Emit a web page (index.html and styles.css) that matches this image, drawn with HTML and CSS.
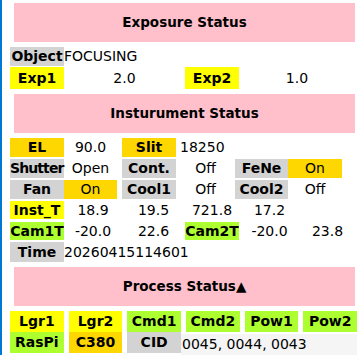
FILE: index.html
```html
<!DOCTYPE html>
<html lang="en">
<head>
<meta charset="UTF-8">
<meta name="viewport" content="width=device-width, initial-scale=1.0">
<title>Status Monitor</title>
<link rel="stylesheet" href="styles.css">
</head>
<body>
<div id="panel">
    <div class="title first">Exposure Status</div>
    <div class="row obj">
        <span class="label gray">Object</span><span class="val left">FOCUSING</span>
    </div>
    <div class="row exp">
        <span class="label yellow">Exp1</span><span class="val">2.0</span>
        <span class="label yellow">Exp2</span><span class="val">1.0</span>
    </div>

    <div class="title">Insturument Status</div>
    <div class="row inst">
        <span class="label gold">EL</span><span class="val">90.0</span>
        <span class="label gold">Slit</span><span class="val left">18250</span>
        <span></span><span></span>
    </div>
    <div class="row inst">
        <span class="label gray tight">Shutter</span><span class="val">Open</span>
        <span class="label gray">Cont.</span><span class="val">Off</span>
        <span class="label gray">FeNe</span><span class="val gold">On</span>
    </div>
    <div class="row inst">
        <span class="label gray">Fan</span><span class="val gold">On</span>
        <span class="label gray">Cool1</span><span class="val">Off</span>
        <span class="label gray">Cool2</span><span class="val">Off</span>
    </div>
    <div class="row temp first-temp">
        <span class="label yellow">Inst_T</span><span class="val">18.9</span><span class="val">19.5</span>
        <span class="val">721.8</span><span class="val">17.2</span><span></span>
    </div>
    <div class="row temp">
        <span class="label green">Cam1T</span><span class="val">-20.0</span><span class="val">22.6</span>
        <span class="label green">Cam2T</span><span class="val">-20.0</span><span class="val">23.8</span>
    </div>
    <div class="row obj time">
        <span class="label gray">Time</span><span class="val left">20260415114601</span>
    </div>

    <div class="title">Process Status&#9650;</div>
    <div id="process">
        <span class="label yellow">Lgr1</span>
        <span class="label yellow">Lgr2</span>
        <span class="label green">Cmd1</span>
        <span class="label green">Cmd2</span>
        <span class="label green">Pow1</span>
        <span class="label green">Pow2</span>
        <span class="label green">RasPi</span>
        <span class="label gold">C380</span>
        <span class="label gray">CID</span>
        <span class="val left cid">0045, 0044, 0043</span>
    </div>
</div>
</body>
</html>
```

FILE: styles.css
```css
body {
    margin: 0;
    font-family: "DejaVu Sans", Verdana, sans-serif;
    font-size: 14px;
    color: #000;
    background: #fff;
    overflow: hidden;
}
#panel {
    border-left: 2px solid #0078d4;
    height: 355px;
    box-sizing: border-box;
    padding-left: 8px;
    padding-top: 3px;
}
.title {
    background-color: pink;
    font-weight: bold;
    height: 39px;
    line-height: 39px;
    text-align: center;
    margin: 5px 5px 5px 4px;
    font-size: 13.5px;
}
.title.first {
    margin-top: 0;
}
.row {
    display: grid;
    white-space: nowrap;
}
.row span, #process span {
    display: block;
    text-align: center;
    overflow: hidden;
}
.label {
    font-weight: bold;
}
.row .tight {
    letter-spacing: -0.9px;
    text-align: left;
    overflow: visible;
}
.row .left, #process .left {
    text-align: left;
    overflow: visible;
}
.gray { background-color: lightgray; }
.yellow { background-color: yellow; }
.gold { background-color: gold; }
.green { background-color: greenyellow; }

.obj {
    grid-template-columns: 54px auto;
    height: 19px;
    line-height: 19px;
    margin-top: 1px;
}
.exp {
    grid-template-columns: 54px 121px 54px 116px;
    height: 22px;
    line-height: 22px;
    margin-top: 1px;
}
.inst {
    grid-template-columns: 54px 53px 59px 59px 53px 54px;
    height: 19px;
    line-height: 19px;
    margin-bottom: 2px;
}
.inst span:nth-child(3) {
    margin-left: 5px;
}
.inst .left {
    padding-left: 4px;
}
.temp {
    grid-template-columns: 54px 58px 63px 54px 61px 55px;
    height: 18px;
    line-height: 18px;
    margin-top: 3px;
}
.first-temp {
    margin-top: 2px;
}
.time {
    height: 20px;
    line-height: 20px;
    margin-top: 2px;
}
#process {
    display: grid;
    grid-template-columns: repeat(6, 1fr);
    column-gap: 5px;
    grid-auto-rows: 21px;
    line-height: 21px;
    width: 347px;
    white-space: nowrap;
}
#process .cid {
    grid-column: 4 / 7;
    margin-left: -5px;
    padding-left: 1px;
    margin-top: 2px;
    height: 24px;
    background-color: whitesmoke;
}
```
